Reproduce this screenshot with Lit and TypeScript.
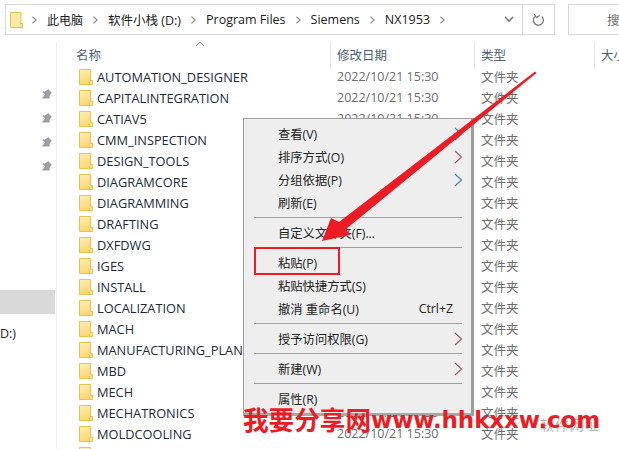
import { LitElement, html, css, svg } from "lit";
import { customElement } from "lit/decorators.js";

const folders = ["AUTOMATION_DESIGNER","CAPITALINTEGRATION","CATIAV5","CMM_INSPECTION","DESIGN_TOOLS","DIAGRAMCORE","DIAGRAMMING","DRAFTING","DXFDWG","IGES","INSTALL","LOCALIZATION","MACH","MANUFACTURING_PLANNING","MBD","MECH","MECHATRONICS","MOLDCOOLING",""];

const folderIcon = html`<svg class="fi" width="14" height="16" viewBox="0 0 14 16"><defs><linearGradient id="g" x1="0" y1="0" x2="0.3" y2="1"><stop offset="0" stop-color="#fff0b8"/><stop offset="1" stop-color="#fcd672"/></linearGradient></defs><path d="M.5.5H11.5V15.5H.5Z" fill="url(#g)" stroke="#e8c14f"/><path d="M11.5 11.5H13.5V15.5H10.5V13" fill="#fbe08a" stroke="#e8c14f"/></svg>`;
const pin = html`<svg width="12" height="12" viewBox="0 0 12 12"><path d="M7 1l4 4-1 .6-1.4 2.4.2 1.4-1 1L1.5 10.5 1 10l.6-.6 2.6-2.9L1.4 4.3l1-1 1.4.2L6.3 2Z" fill="#9a9ea4"/></svg>`;
const chev = html`<svg class="chev" width="7" height="10" viewBox="0 0 7 10"><path d="M1 .8L5.5 5 1 9.2" fill="none" stroke="#8d8d8d" stroke-width="1.6"/></svg>`;
const sub = html`<svg class="sub" width="9" height="14" viewBox="0 0 9 14"><path d="M1 1l6.500 6L1 13" fill="none" stroke-width="1.100"/></svg>`;

type Mi = { t?: string; s?: string; sub?: boolean; sep?: boolean; c?: string };
const menu: Mi[] = [
  { t: "查看(V)", sub: true, c: "#3f7fb8" },
  { t: "排序方式(O)", sub: true, c: "#a8505c" },
  { t: "分组依据(P)", sub: true, c: "#3f7fb8" },
  { t: "刷新(E)" },
  { sep: true },
  { t: "自定义文件夹(F)..." },
  { sep: true },
  { t: "粘贴(P)" },
  { t: "粘贴快捷方式(S)" },
  { t: "撤消 重命名(U)", s: "Ctrl+Z" },
  { sep: true },
  { t: "授予访问权限(G)", sub: true, c: "#a8505c" },
  { sep: true },
  { t: "新建(W)", sub: true, c: "#a8505c" },
  { sep: true },
  { t: "属性(R)" },
];

@customElement("app-root")
export class AppRoot extends LitElement {
  static styles = css`
    :host { display: block; position: relative; width: 619px; height: 449px; overflow: hidden; background: #fff;
      font-family: "Open Sans", "Noto Sans CJK SC", sans-serif; font-size: 12.5px; color: #1a1a1a; }
    .top { display: flex; gap: 13px; padding: 4px 0 0 5px; height: 42px; box-sizing: border-box; }
    .addr { width: 550px; height: 31px; box-sizing: border-box; border: 1px solid #d9d9d9; display: flex; align-items: center; flex: none; }
    .crumbs { display: flex; align-items: center; flex: 1; padding-left: 4px; color: #222; white-space: nowrap; }
    .crumbs svg.chev { margin: 0 9px 0 9px; transform: scale(.8); }
    .crumbs svg.chev.first { margin-left: 8px; }
    .cjk { font-size: 12px; }
    .drop { width: 14px; display: flex; justify-content: center; margin-right: 6px; }
    .refresh { width: 31px; height: 100%; border-left: 1px solid #d9d9d9; display: flex; align-items: center; justify-content: center; }
    .search { flex: 1; height: 31px; box-sizing: border-box; border: 1px solid #d9d9d9; border-right: none; display: flex; align-items: center; padding-left: 14px; gap: 24px; color: #6d6d6d; overflow: hidden; white-space: nowrap; }
    .main { display: flex; }
    .side { width: 57px; height: 407px; box-sizing: border-box; border-right: 1px solid #f0f0f0; flex: none; padding-top: 46px; display: flex; flex-direction: column; }
    .pins { display: flex; flex-direction: column; gap: 12px; align-items: flex-end; padding-right: 3px; }
    .sel { height: 24px; width: 55px; background: #d9d9d9; margin-top: 118px; flex: none; }
    .drv { margin-top: 10px; line-height: 20px; color: #222; }
    .list { flex: 1; min-width: 0; position: relative; }
    .head { display: flex; height: 24px; color: #4c607a; position: relative; }
    .sort { position: absolute; left: 138px; top: -1px; }
    .h { box-sizing: border-box; height: 27px; line-height: 27px; padding-left: 5px; }
    .h + .h { border-left: 1px solid #e5e5e5; padding-left: 6px; }
    .c1 { width: 273px; flex: none; padding-left: 19px; }
    .c2 { width: 144px; flex: none; }
    .c3 { width: 120px; flex: none; }
    .c4 { flex: 1; white-space: nowrap; }
    .row { display: flex; height: 21px; align-items: center; white-space: nowrap; }
    .name { width: 273px; flex: none; display: flex; align-items: center; padding-left: 22px; box-sizing: border-box; gap: 4px; color: #1c2a3a; font-size: 12.800px; }
    .fi { flex: none; }
    .date { width: 151px; flex: none; padding-left: 7px; box-sizing: border-box; color: #6d6d6d; }
    .type { color: #6d6d6d; }
    .menu { position: absolute; left: 243px; top: 118px; width: 231px; height: 298px; box-sizing: border-box; background: #eeeeee; border: 1px solid #a0a0a0; border-right: 3px solid #9c9c9c; border-bottom: 3px solid #a8a8a8; padding: 3px 0 0 0; color: #222; font-size: 12.300px; }
    .mi { display: flex; height: 23px; align-items: center; padding-left: 34px; padding-right: 8px; justify-content: space-between; white-space: nowrap; }
    .mi .short { margin-right: 10px; }
    .sub { flex: none; }
    .msep { height: 1px; background: #a0a0a0; margin: 3px 9px 3px 10px; }
    .redbox { position: absolute; left: 254px; top: 247px; width: 86px; height: 28px; box-sizing: border-box; border: 2px solid #ed1c24; }
    .arrow { position: absolute; left: 0; top: 0; pointer-events: none; }
    .wm { position: absolute; left: 243px; top: 399px; display: flex; align-items: baseline; color: #ed1c24; font-weight: 700; white-space: nowrap; line-height: 40px; }
    .wm .cn { font-family: "Noto Sans CJK SC", sans-serif; font-size: 25.600px; }
    .wm .en { font-family: "DejaVu Sans", sans-serif; font-size: 23px; letter-spacing: -.1px; transform: translateY(-2px); }
    .ghost { position: absolute; left: 540px; top: 414px; color: #b5b5b5; font-size: 14px; letter-spacing: 1px; white-space: nowrap; }
  `;

  render() {
    return html`
      <div class="top">
        <div class="addr">
          <div class="crumbs">
            ${html`<svg width="13" height="16" viewBox="0 0 13 16"><path d="M.5.5H11V15.500H.5Z" fill="#ffeaa6" stroke="#e8c14f"/><path d="M10 11.500H12.500V15.500H10" fill="#fbe08a" stroke="#e8c14f"/></svg>`}
            <svg class="chev first" width="7" height="10" viewBox="0 0 7 10"><path d="M1 .8L5.500 5 1 9.200" fill="none" stroke="#8d8d8d" stroke-width="1.600"/></svg><span class="cjk">此电脑</span>${chev}<span>软件小栈 (D:)</span>${chev}<span>Program Files</span>${chev}<span>Siemens</span>${chev}<span>NX1953</span>${chev}
            <span style="flex:1"></span>
            <span class="drop"><svg width="10" height="7" viewBox="0 0 10 7"><path d="M1 1l4 4 4-4" fill="none" stroke="#777" stroke-width="1.600"/></svg></span>
          </div>
          <div class="refresh"><svg width="13" height="14" viewBox="0 0 13 14"><path d="M9.800 3.500A5 5 0 1 1 4 2.700" fill="none" stroke="#777" stroke-width="1.300"/><path d="M3.500.5V4.500H7.500" fill="none" stroke="#777" stroke-width="1.100" transform="rotate(-30 4 3)"/></svg></div>
        </div>
        <div class="search">
          <svg width="13" height="13" viewBox="0 0 13 13"><circle cx="8" cy="5" r="4" fill="none" stroke="#8a8a8a"/><path d="M5 8L1 12" stroke="#c9906f" stroke-width="1.200"/></svg>
          <span>搜索</span>
        </div>
      </div>
      <div class="main">
        <div class="side">
          <div class="pins">${pin}${pin}${pin}${pin}</div>
          <div class="sel"></div>
          <div class="drv">D:)</div>
        </div>
        <div class="list">
          <div class="head">
            <svg class="sort" width="10" height="6" viewBox="0 0 10 6"><path d="M1 5l4-4 4 4" fill="none" stroke="#888"/></svg>
            <div class="h c1">名称</div>
            <div class="h c2">修改日期</div>
            <div class="h c3">类型</div>
            <div class="h c4">大小</div>
          </div>
          ${folders.map(f => html`<div class="row"><div class="name">${folderIcon}<span>${f}</span></div>${f ? html`<div class="date">2022/10/21 15:30</div><div class="type">文件夹</div>` : ""}</div>`)}
        </div>
      </div>
      <div class="ghost">软件网址</div>
      <div class="menu">
        ${menu.map(m => m.sep ? html`<div class="msep"></div>` : html`<div class="mi"><span>${m.t}</span>${m.s ? html`<span class="short">${m.s}</span>` : ""}${m.sub ? html`<span style="stroke:${m.c};display:flex">${sub}</span>` : ""}</div>`)}
      </div>
      <div class="redbox"></div>
      <svg class="arrow" width="619" height="449" viewBox="0 0 619 449">
        ${svg`<path d="M535 71.500L536.500 73 346 229 350 235 322 241 331 218 339 222Z" fill="#ed1c24"/>`}
      </svg>
      <div class="wm"><span class="cn">我要分享网</span><span class="en">www.hhkxxw.com</span></div>
    `;
  }
}
